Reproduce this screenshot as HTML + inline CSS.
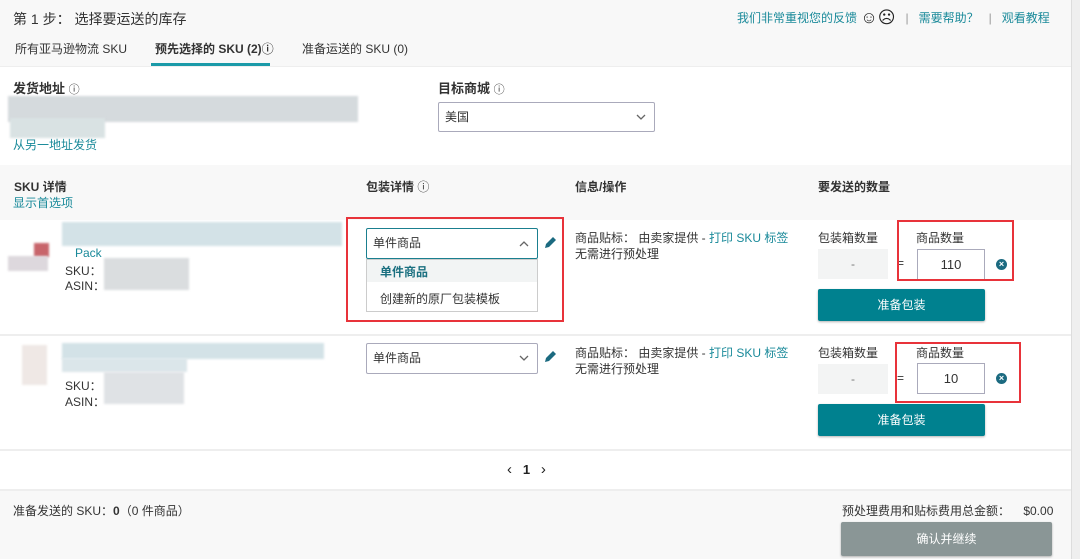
<!DOCTYPE html>
<html><head><meta charset="utf-8"><style>
*{box-sizing:border-box;margin:0;padding:0}
body{width:1080px;height:559px;overflow:hidden;background:#fff;font-family:"Liberation Sans","Noto Sans CJK SC",sans-serif;font-size:12px;color:#333;position:relative}
.a{position:absolute;white-space:nowrap}
.t{color:#1a8a9a}
.b{font-weight:bold}
.sel{position:absolute;border:1px solid #aab;background:#fff;border-radius:2px;padding-left:6px;line-height:28px;font-size:12px}
.sel svg{position:absolute;right:8px;top:11px}
.btn{position:absolute;background:#00818f;color:#fff;text-align:center;font-size:12px;border-radius:2px;box-shadow:0 1px 2px rgba(0,0,0,.3)}
.red{position:absolute;border:2px solid #e8333a}
.blur{position:absolute;background:#d8e0e3;filter:blur(1px)}
.inp{position:absolute;border:1px solid #aab;background:#fff;text-align:center;line-height:29px;font-size:13px}
.gray{position:absolute;background:#f3f4f4;text-align:center;line-height:30px;color:#777}
.x{position:absolute;width:11px;height:11px;border-radius:50%;background:#1b6a80;color:#fff;font-size:9px;line-height:11px;text-align:center;font-weight:bold}
</style></head><body>
<div class="a" style="left:0;top:0;width:1071px;height:67px;background:#f8f8f8;border-bottom:1px solid #eee"></div>
<div class="a" style="left:1071px;top:0;width:9px;height:559px;background:#efefef;border-left:1px solid #ddd"></div>
<div class="a" style="left:13px;top:9px;font-size:14px">第 1 步：&nbsp;选择要运送的库存</div>
<div class="a t" style="left:737px;top:10px;font-size:12px;line-height:16px">我们非常重视您的反馈 <span style="color:#222;font-size:17px;vertical-align:-1px">☺☹</span> &nbsp;&nbsp;<span style="color:#999">|</span>&nbsp;&nbsp; 需要帮助？ &nbsp;&nbsp;<span style="color:#999">|</span>&nbsp;&nbsp; 观看教程</div>
<div class="a" style="left:15px;top:40px">所有亚马逊物流 SKU</div>
<div class="a b" style="left:155px;top:40px;font-weight:600">预先选择的 SKU (2)ⓘ</div>
<div class="a" style="left:151px;top:63px;width:119px;height:3px;background:#1a9aa8"></div>
<div class="a" style="left:302px;top:40px">准备运送的 SKU (0)</div>

<div class="a b" style="left:13px;top:78px;font-size:13px">发货地址 <span style="font-weight:normal;font-size:11px">ⓘ</span></div>
<div class="blur" style="left:8px;top:96px;width:350px;height:26px;background:#d5dadd"></div>
<div class="blur" style="left:10px;top:118px;width:95px;height:20px;background:#d9e2e3"></div>
<div class="a t" style="left:13px;top:136px;font-size:12px">从另一地址发货</div>
<div class="a b" style="left:438px;top:78px;font-size:13px">目标商城 <span style="font-weight:normal;font-size:11px">ⓘ</span></div>
<div class="sel" style="left:438px;top:102px;width:217px;height:30px">美国<svg width="10" height="7" viewBox="0 0 10 7"><path d="M1 1 L5 5 L9 1" fill="none" stroke="#666" stroke-width="1.3"/></svg></div>

<div class="a" style="left:0;top:165px;width:1071px;height:55px;background:#f8f8f8"></div>
<div class="a b" style="left:14px;top:178px">SKU 详情</div>
<div class="a t" style="left:13px;top:194px">显示首选项</div>
<div class="a b" style="left:366px;top:178px">包装详情 <span style="font-weight:normal">ⓘ</span></div>
<div class="a b" style="left:575px;top:178px">信息/操作</div>
<div class="a b" style="left:818px;top:178px">要发送的数量</div>

<!-- row1 -->
<div class="blur" style="left:62px;top:222px;width:280px;height:24px;background:#d3e2e7"></div>
<div class="blur" style="left:34px;top:243px;width:15px;height:14px;background:#c8656b"></div>
<div class="blur" style="left:8px;top:256px;width:40px;height:15px;background:#ddd8dd"></div>
<div class="a t" style="left:75px;top:246px">Pack</div>
<div class="a" style="left:65px;top:262px">SKU：</div>
<div class="a" style="left:65px;top:277px">ASIN：</div>
<div class="blur" style="left:104px;top:258px;width:85px;height:32px;background:#dadddf"></div>
<div class="sel" style="left:366px;top:228px;width:172px;height:31px;border-color:#1a7f8f">单件商品<svg width="10" height="7" viewBox="0 0 10 7"><path d="M1 6 L5 2 L9 6" fill="none" stroke="#666" stroke-width="1.3"/></svg></div>
<div class="a" style="left:366px;top:259px;width:172px;height:53px;border:1px solid #ccc;background:#fff"></div>
<div class="a" style="left:367px;top:260px;width:170px;height:22px;background:#f2f4f4"></div>
<div class="a b t" style="left:380px;top:263px;color:#1b7080">单件商品</div>
<div class="a" style="left:380px;top:290px">创建新的原厂包装模板</div>
<div class="red" style="left:346px;top:217px;width:218px;height:105px"></div>
<svg class="a" style="left:543px;top:235px" width="15" height="15" viewBox="0 0 15 15"><path d="M2 13 L3 9 L10 2 L13 5 L6 12 Z" fill="#1b6a80"/></svg>
<div class="a" style="left:575px;top:229px">商品贴标：&nbsp;由卖家提供 - <span class="t">打印 SKU 标签</span></div>
<div class="a" style="left:575px;top:245px">无需进行预处理</div>
<div class="a" style="left:818px;top:229px">包装箱数量</div>
<div class="a" style="left:916px;top:229px">商品数量</div>
<div class="gray" style="left:818px;top:249px;width:70px;height:30px">-</div>
<div class="a" style="left:897px;top:256px">=</div>
<div class="inp" style="left:917px;top:249px;width:68px;height:31px">110</div>
<div class="x" style="left:996px;top:259px">×</div>
<div class="red" style="left:897px;top:220px;width:117px;height:61px"></div>
<div class="btn" style="left:818px;top:289px;width:167px;height:32px;line-height:32px">准备包装</div>
<div class="a" style="left:0;top:334px;width:1071px;height:2px;background:#eee"></div>

<!-- row2 -->
<div class="blur" style="left:62px;top:343px;width:262px;height:16px;background:#d3e2e7"></div>
<div class="blur" style="left:62px;top:358px;width:125px;height:14px;background:#dbe6ea"></div>
<div class="blur" style="left:22px;top:345px;width:25px;height:40px;background:#efe8e5"></div>
<div class="a" style="left:65px;top:377px">SKU：</div>
<div class="a" style="left:65px;top:393px">ASIN：</div>
<div class="blur" style="left:104px;top:372px;width:80px;height:32px;background:#dfe2e5"></div>
<div class="sel" style="left:366px;top:343px;width:172px;height:31px">单件商品<svg width="10" height="7" viewBox="0 0 10 7"><path d="M1 1 L5 5 L9 1" fill="none" stroke="#666" stroke-width="1.3"/></svg></div>
<svg class="a" style="left:543px;top:349px" width="15" height="15" viewBox="0 0 15 15"><path d="M2 13 L3 9 L10 2 L13 5 L6 12 Z" fill="#1b6a80"/></svg>
<div class="a" style="left:575px;top:344px">商品贴标：&nbsp;由卖家提供 - <span class="t">打印 SKU 标签</span></div>
<div class="a" style="left:575px;top:360px">无需进行预处理</div>
<div class="a" style="left:818px;top:344px">包装箱数量</div>
<div class="a" style="left:916px;top:344px">商品数量</div>
<div class="gray" style="left:818px;top:364px;width:70px;height:30px">-</div>
<div class="a" style="left:897px;top:371px">=</div>
<div class="inp" style="left:917px;top:363px;width:68px;height:31px">10</div>
<div class="x" style="left:996px;top:373px">×</div>
<div class="red" style="left:895px;top:342px;width:126px;height:61px"></div>
<div class="btn" style="left:818px;top:404px;width:167px;height:32px;line-height:32px">准备包装</div>
<div class="a" style="left:0;top:449px;width:1071px;height:2px;background:#eee"></div>

<div class="a" style="left:507px;top:461px;font-size:13px;color:#222"><span style="font-size:15px">‹</span> &nbsp; <b>1</b> &nbsp; <span style="font-size:15px">›</span></div>

<div class="a" style="left:0;top:489px;width:1071px;height:70px;background:#f8f8f8;border-top:2px solid #eee"></div>
<div class="a" style="left:13px;top:502px">准备发送的 SKU：<b>0</b>（0 件商品）</div>
<div class="a" style="left:842px;top:502px">预处理费用和贴标费用总金额： &nbsp;&nbsp;&nbsp;$0.00</div>
<div class="btn" style="left:841px;top:522px;width:211px;height:34px;line-height:34px;background:#8a9696">确认并继续</div>
</body></html>
